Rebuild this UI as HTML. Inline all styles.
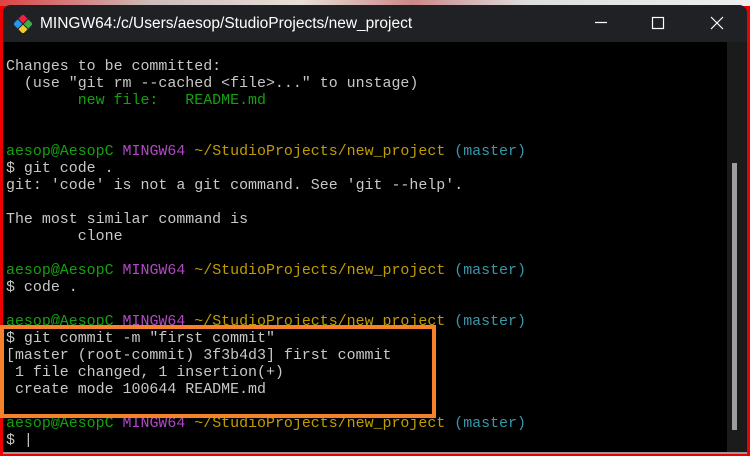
<!DOCTYPE html>
<html><head><style>
body{margin:0;width:750px;height:456px;background:#e00;position:relative;overflow:hidden;font-family:"Liberation Mono",monospace}
#desk{position:absolute;left:0;top:0;width:750px;height:6px;background:linear-gradient(90deg,#d44,#cbb 20%,#e8e0d8 40%,#c88 55%,#ddd 70%,#eee)}
#win{position:absolute;left:3px;top:5px;width:744px;height:448px;background:#000;border-radius:8px 8px 0 0;overflow:hidden}
#title{position:absolute;left:0;top:0;width:744px;height:37px;background:#202124;color:#fff;font-family:"Liberation Sans",sans-serif;font-size:15.5px;line-height:37px}
#title span{position:absolute;left:37px;top:0}
#sb{position:absolute;left:724px;top:37px;width:20px;height:411px;background:#1b1b1b}
#thumb{position:absolute;left:732px;top:163px;width:5px;height:267px;background:#9e9e9e}
#bot{position:absolute;left:3px;top:452px;width:744px;height:2px;background:#999}
pre{position:absolute;left:6px;top:59px;margin:0;font-size:14.95px;line-height:17px;color:#c8c8c8;font-family:"Liberation Mono",monospace}
.g{color:#13a10e}.m{color:#b148c6}.y{color:#c19c00}.c{color:#3a96a8}.gr{color:#13a10e}
#box{position:absolute;left:0px;top:325px;width:428px;height:85px;border:4px solid #f5822a}
</style></head><body>
<div id="desk"></div>
<div id="win">
<div id="title">
<svg style="position:absolute;left:11px;top:10px" width="18" height="18" viewBox="0 0 18 18"><g transform="rotate(45 9 9)"><rect x="2" y="2" width="6.5" height="6.5" fill="#e24"/><rect x="9.5" y="2" width="6.5" height="6.5" fill="#4a4"/><rect x="2" y="9.5" width="6.5" height="6.5" fill="#29e"/><rect x="9.5" y="9.5" width="6.5" height="6.5" fill="#ec3"/></g></svg>
<span>MINGW64:/c/Users/aesop/StudioProjects/new_project</span>
<svg style="position:absolute;left:592px;top:0" width="150" height="37"><line x1="0" y1="17.5" x2="12" y2="17.5" stroke="#fff" stroke-width="1.2"/><rect x="57.5" y="12.5" width="11" height="11" fill="none" stroke="#fff" stroke-width="1.2"/><path d="M116 12l12 12M128 12l-12 12" stroke="#fff" stroke-width="1.2"/></svg>
</div>
<div id="sb"></div>
</div>
<div id="thumb"></div>
<div id="bot"></div>
<pre>Changes to be committed:
  (use "git rm --cached &lt;file&gt;..." to unstage)
<span class="gr">        new file:   README.md</span>


<span class="g">aesop@AesopC</span> <span class="m">MINGW64</span> <span class="y">~/StudioProjects/new_project</span> <span class="c">(master)</span>
$ git code .
git: 'code' is not a git command. See 'git --help'.

The most similar command is
        clone

<span class="g">aesop@AesopC</span> <span class="m">MINGW64</span> <span class="y">~/StudioProjects/new_project</span> <span class="c">(master)</span>
$ code .

<span class="g">aesop@AesopC</span> <span class="m">MINGW64</span> <span class="y">~/StudioProjects/new_project</span> <span class="c">(master)</span>
$ git commit -m "first commit"
[master (root-commit) 3f3b4d3] first commit
 1 file changed, 1 insertion(+)
 create mode 100644 README.md

<span class="g">aesop@AesopC</span> <span class="m">MINGW64</span> <span class="y">~/StudioProjects/new_project</span> <span class="c">(master)</span>
$ |</pre>
<div id="box"></div>
</body></html>
